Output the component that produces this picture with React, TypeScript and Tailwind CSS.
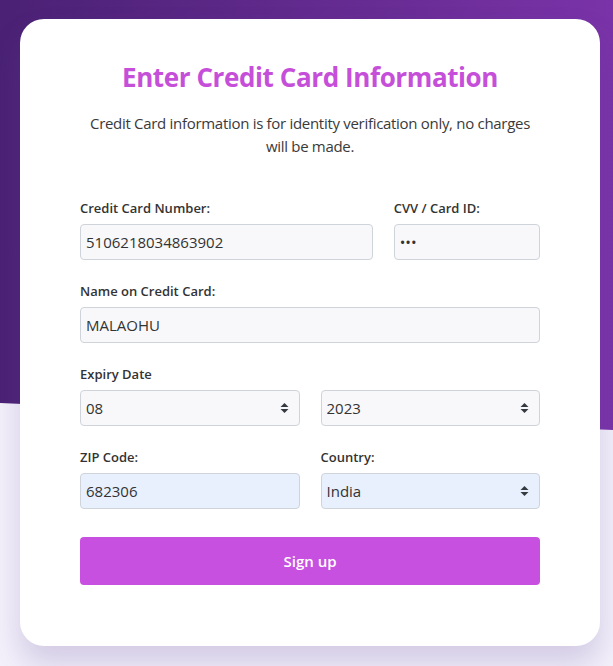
import { useState } from "react";

function Chevrons() {
  return (
    <svg width="9" height="12" viewBox="0 0 9 12" className="pointer-events-none absolute right-[11px] top-1/2 -translate-y-1/2">
      <path d="M4.5 1 L8.5 5 H0.5 Z" fill="#343a40" />
      <path d="M4.5 11 L8.5 7 H0.5 Z" fill="#343a40" />
    </svg>
  );
}

const fieldBase =
  "h-9 w-full rounded border border-[#ced4da] px-[5px] text-[15px] leading-normal text-[#333] outline-none";

const labelCls = "block text-[13px] font-semibold leading-[18px] text-[#333]";

export default function App() {
  const [card, setCard] = useState("5106218034863902");
  const [cvv, setCvv] = useState("123");
  const [name, setName] = useState("MALAOHU");
  const [month, setMonth] = useState("08");
  const [year, setYear] = useState("2023");
  const [zip, setZip] = useState("682306");
  const [country, setCountry] = useState("India");

  return (
    <div className="relative min-h-[666px] overflow-hidden bg-[#f4f1fb] font-['Open_Sans',sans-serif]">
      <div className="absolute inset-x-0 top-0 h-[430px] bg-[linear-gradient(90deg,#4a2174,#7a33a8)] [clip-path:polygon(0_0,100%_0,100%_430px,0_403px)]" />
      <div className="relative pl-5 pr-[13px] pt-[19px] pb-[21px]">
        <div className="rounded-3xl bg-white px-[60px] pt-[40px] pb-[61px] shadow-[0_18px_30px_rgba(90,70,150,0.22)]">
          <h1 className="text-center text-[26px] font-bold leading-9 tracking-[-0.4px] text-[#c64fd9]">
            Enter Credit Card Information
          </h1>
          <p className="mx-auto mt-[17px] max-w-[450px] text-center text-[15px] leading-[23px] tracking-[-0.3px] text-[#3a3a3a]">
            Credit Card information is for identity verification only, no charges will be made.
          </p>

          <form className="mt-[41px]" onSubmit={(e) => e.preventDefault()}>
            <div className="grid grid-cols-[2fr_1fr] gap-x-[21px]">
              <label className={labelCls}>
                Credit Card Number:
                <input value={card} onChange={(e) => setCard(e.target.value)} className={`${fieldBase} mt-[7px] bg-[#f8f8fa] font-normal`} />
              </label>
              <label className={labelCls}>
                CVV / Card ID:
                <input type="password" value={cvv} onChange={(e) => setCvv(e.target.value)} className={`${fieldBase} mt-[7px] bg-[#f8f8fa] font-normal`} />
              </label>
            </div>

            <label className={`${labelCls} mt-[22px]`}>
              Name on Credit Card:
              <input value={name} onChange={(e) => setName(e.target.value)} className={`${fieldBase} mt-[7px] bg-[#f8f8fa] font-normal`} />
            </label>

            <p className={`${labelCls} mt-[22px]`}>Expiry Date</p>
            <div className="mt-[7px] grid grid-cols-2 gap-x-[21px]">
              <div className="relative">
                <select value={month} onChange={(e) => setMonth(e.target.value)} className={`${fieldBase} appearance-none bg-[#f8f8fa]`}>
                  {["01", "02", "03", "04", "05", "06", "07", "08", "09", "10", "11", "12"].map((m) => (
                    <option key={m}>{m}</option>
                  ))}
                </select>
                <Chevrons />
              </div>
              <div className="relative">
                <select value={year} onChange={(e) => setYear(e.target.value)} className={`${fieldBase} appearance-none bg-[#f8f8fa]`}>
                  {["2023", "2024", "2025", "2026", "2027", "2028"].map((y) => (
                    <option key={y}>{y}</option>
                  ))}
                </select>
                <Chevrons />
              </div>
            </div>

            <div className="mt-[22px] grid grid-cols-2 gap-x-[21px]">
              <label className={labelCls}>
                ZIP Code:
                <input value={zip} onChange={(e) => setZip(e.target.value)} className={`${fieldBase} mt-[7px] bg-[#e8f0fe] font-normal`} />
              </label>
              <label className={labelCls}>
                Country:
                <div className="relative mt-[7px]">
                  <select value={country} onChange={(e) => setCountry(e.target.value)} className={`${fieldBase} appearance-none bg-[#e8f0fe] font-normal`}>
                    {["India", "United States", "United Kingdom", "Canada"].map((c) => (
                      <option key={c}>{c}</option>
                    ))}
                  </select>
                  <Chevrons />
                </div>
              </label>
            </div>

            <button type="submit" className="mt-[28px] h-[48px] w-full rounded bg-[#c850e0] text-[15px] font-semibold text-white">
              Sign up
            </button>
          </form>
        </div>
      </div>
    </div>
  );
}
